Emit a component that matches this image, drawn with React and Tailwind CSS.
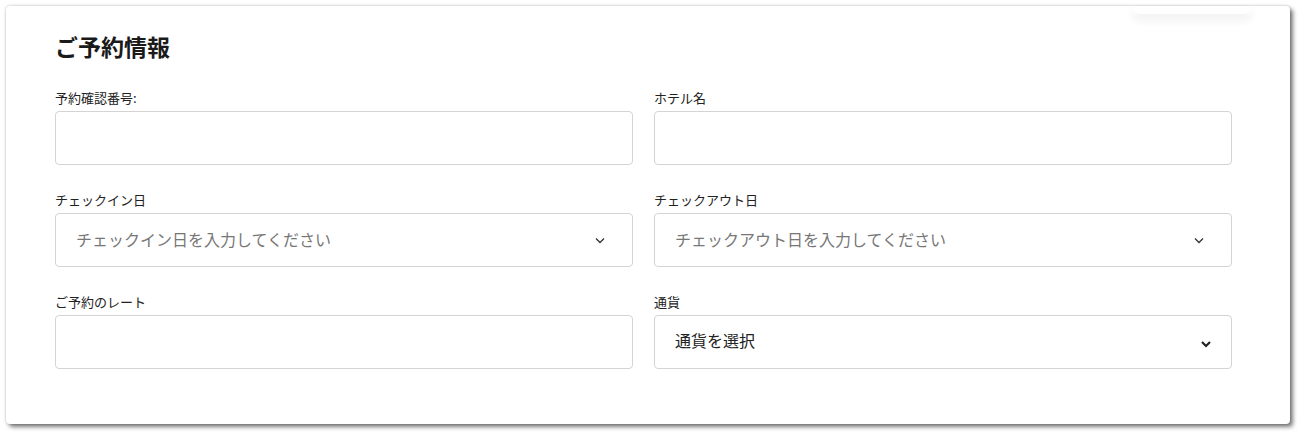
import React from "react";

const font = { fontFamily: '"Noto Sans CJK JP", "Noto Sans", sans-serif' };

const Chevron = ({ bold }) =>
  bold ? (
    <svg width="10" height="8" viewBox="0 0 10 8" className="text-[#222]">
      <path d="M1 2l4 4 4-4" fill="none" stroke="currentColor" strokeWidth="2.2" />
    </svg>
  ) : (
    <svg width="10" height="7" viewBox="0 0 10 7" className="text-[#333]">
      <path d="M1 1.5l4 4 4-4" fill="none" stroke="currentColor" strokeWidth="1.3" />
    </svg>
  );

const Field = ({ label, children }) => (
  <div className="flex flex-col">
    <label className="text-[13px] leading-[18px] text-[#222] mb-[4px]">{label}</label>
    {children}
  </div>
);

const Box = ({ children }) => (
  <div className="h-[54px] rounded-[4px] border border-[#d4d4d4] bg-white flex items-center px-[20px]">
    {children}
  </div>
);

export default function App() {
  return (
    <div className="w-[1303px] h-[437px] bg-white pl-[6px] pt-[6px]" style={font}>
      <div className="relative w-[1284px] h-[418px] bg-white rounded-[4px] shadow-[0_0_3px_rgba(0,0,0,0.25),3px_3px_4px_rgba(0,0,0,0.5)] pl-[49px] pr-[58px] pt-[24px]">
        <div className="absolute top-0 left-[1126px] w-[120px] h-[8px] bg-white rounded-b-[8px] shadow-[0_6px_10px_rgba(0,0,0,0.07)]" />
        <h2 className="text-[23px] leading-[32px] font-bold text-[#1a1a1a]">ご予約情報</h2>
        <div className="grid grid-cols-2 gap-x-[21px] gap-y-[26px] mt-[27px]">
          <Field label="予約確認番号:">
            <Box />
          </Field>
          <Field label="ホテル名">
            <Box />
          </Field>
          <Field label="チェックイン日">
            <Box>
              <span className="flex-1 text-[16px] text-[#777] mb-[2px]">チェックイン日を入力してください</span>
              <span className="mr-[7px]"><Chevron /></span>
            </Box>
          </Field>
          <Field label="チェックアウト日">
            <Box>
              <span className="flex-1 text-[16px] text-[#777] mb-[2px]">チェックアウト日を入力してください</span>
              <span className="mr-[7px]"><Chevron /></span>
            </Box>
          </Field>
          <Field label="ご予約のレート">
            <Box />
          </Field>
          <Field label="通貨">
            <Box>
              <span className="flex-1 text-[16px] text-[#222] mb-[5px]">通貨を選択</span>
              <span className="mt-[4px]"><Chevron bold /></span>
            </Box>
          </Field>
        </div>
      </div>
    </div>
  );
}
